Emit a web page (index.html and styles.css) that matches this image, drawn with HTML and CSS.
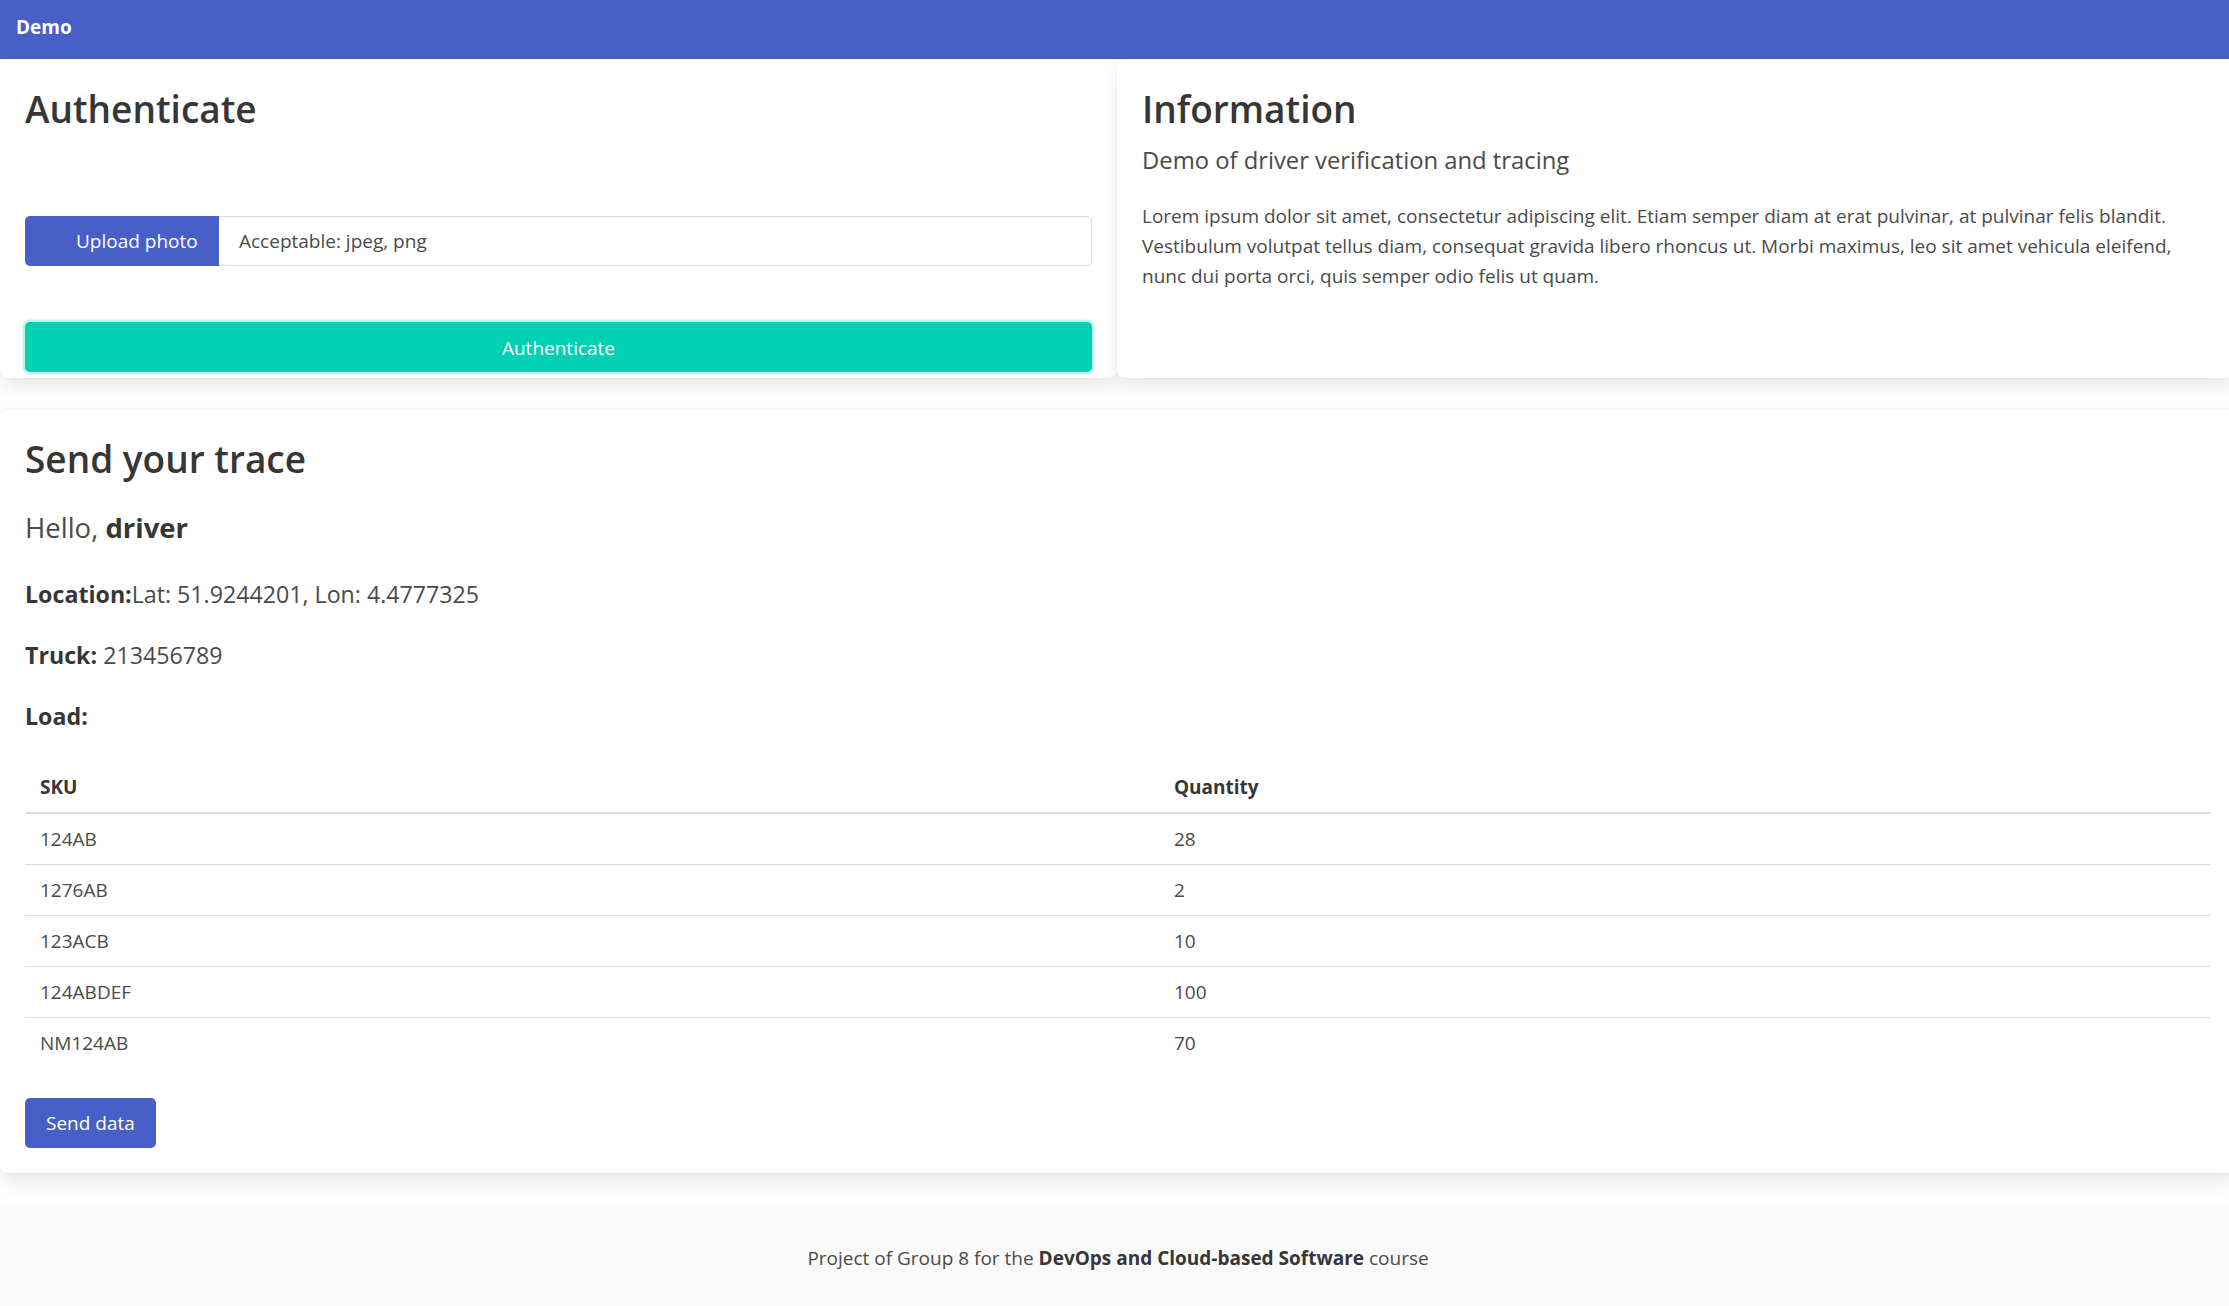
FILE: index.html
```html
<!DOCTYPE html>
<html lang="en">
<head>
<meta charset="utf-8">
<title>Demo</title>
<link rel="stylesheet" href="styles.css">
</head>
<body>
<div class="page">
  <nav class="navbar"><span class="brand">Demo</span></nav>

  <div class="top-row">
    <section class="card card-auth">
      <h1 class="title">Authenticate</h1>
      <div class="file">
        <span class="file-cta"><span class="file-label">Upload photo</span></span>
        <span class="file-name">Acceptable: jpeg, png</span>
      </div>
      <button class="btn btn-auth" type="button">Authenticate</button>
    </section>

    <section class="card card-info">
      <h1 class="title">Information</h1>
      <h2 class="subtitle">Demo of driver verification and tracing</h2>
      <p class="lorem">Lorem ipsum dolor sit amet, consectetur adipiscing elit. Etiam semper diam at erat pulvinar, at pulvinar felis blandit. Vestibulum volutpat tellus diam, consequat gravida libero rhoncus ut. Morbi maximus, leo sit amet vehicula eleifend, nunc dui porta orci, quis semper odio felis ut quam.</p>
    </section>
  </div>

  <section class="card card-trace">
    <h1 class="title">Send your trace</h1>
    <p class="hello">Hello, <strong>driver</strong></p>
    <p class="info-line first"><strong>Location:</strong>Lat: 51.9244201, Lon: 4.4777325</p>
    <p class="info-line"><strong>Truck:</strong> 213456789</p>
    <p class="info-line"><strong>Load:</strong></p>

    <table class="load-table">
      <thead>
        <tr><th class="col-sku">SKU</th><th>Quantity</th></tr>
      </thead>
      <tbody>
        <tr><td>124AB</td><td>28</td></tr>
        <tr><td>1276AB</td><td>2</td></tr>
        <tr><td>123ACB</td><td>10</td></tr>
        <tr><td>124ABDEF</td><td>100</td></tr>
        <tr><td>NM124AB</td><td>70</td></tr>
      </tbody>
    </table>

    <button class="btn btn-send" type="button">Send data</button>
  </section>

  <footer class="footer">
    <p>Project of Group 8 for the <strong>DevOps and Cloud-based Software</strong> course</p>
  </footer>
</div>
</body>
</html>
```

FILE: styles.css
```css
html {
  overflow-x: hidden;
}

body {
  margin: 0;
  background: #ffffff;
  font-family: "Open Sans", "Noto Sans", sans-serif;
  color: #4a4a4a;
  overflow-x: hidden;
}

.page {
  margin-right: -7px;
}

strong {
  font-weight: 700;
  color: #363636;
}

/* Navbar */
.navbar {
  height: 59px;
  box-sizing: border-box;
  padding: 14px 16px 0;
  background: #485fc7;
}

.brand {
  display: block;
  font-size: 19px;
  line-height: 26px;
  font-weight: 700;
  color: #ffffff;
}

/* Cards */
.card {
  background: #ffffff;
  border-radius: 7.5px;
  box-shadow: 0 10px 20px -2.5px rgba(10, 10, 10, 0.1), 0 0 0 1px rgba(10, 10, 10, 0.02);
  box-sizing: border-box;
  padding: 25px;
}

.top-row {
  display: flex;
  height: 319px;
}

.card-auth {
  width: 1117px;
  flex: none;
  padding-bottom: 6px;
  display: flex;
  flex-direction: column;
}

.card-info {
  flex: 1;
}

.title {
  margin: 3px 0 0;
  font-size: 37px;
  line-height: 44px;
  font-weight: 600;
  color: #363636;
}

/* File input */
.file {
  display: flex;
  height: 50px;
  margin-top: 85px;
}

.file-cta {
  width: 194px;
  flex: none;
  box-sizing: border-box;
  padding-left: 51px;
  background: #485fc7;
  color: #ffffff;
  border-radius: 5px 0 0 5px;
  font-size: 19px;
  line-height: 50px;
}

.file-name {
  flex: 1;
  border: 1px solid #dbdbdb;
  border-left: 0;
  border-radius: 0 5px 5px 0;
  padding-left: 20px;
  font-size: 19px;
  line-height: 48px;
  color: #4a4a4a;
}

/* Buttons */
.btn {
  display: block;
  height: 50px;
  border: 0;
  border-radius: 5px;
  color: #ffffff;
  font-family: "Open Sans", "Noto Sans", sans-serif;
  font-size: 19px;
  line-height: 50px;
  cursor: pointer;
}

.btn-auth {
  width: 100%;
  margin-top: 56px;
  background: #00d1b2;
  box-shadow: 0 0 0 2.5px rgba(0, 209, 178, 0.25);
}

.btn-send {
  margin-top: 30px;
  padding: 0 21px;
  background: #485fc7;
}

/* Info card */
.subtitle {
  margin: 14px 0 0;
  font-size: 23.8px;
  line-height: 30px;
  font-weight: 400;
  color: #4a4a4a;
}

.lorem {
  margin: 26px 0 0;
  max-width: 1040px;
  font-size: 19px;
  line-height: 30px;
}

/* Trace card */
.card-trace {
  margin-top: 31px;
}

.hello {
  margin: 29px 0 0;
  font-size: 27.5px;
  line-height: 36px;
}

.info-line {
  margin: 25px 0 0;
  font-size: 23.2px;
  line-height: 36px;
}

.info-line.first {
  margin-top: 30px;
}

.load-table {
  width: 100%;
  margin-top: 28px;
  border-collapse: collapse;
  font-size: 19px;
  line-height: 30px;
}

.load-table th {
  text-align: left;
  padding: 10px 15px;
  font-weight: 700;
  color: #363636;
  border-bottom: 2px solid #dbdbdb;
}

.load-table .col-sku {
  width: 1104px;
}

.load-table td {
  padding: 10px 15px;
  color: #4a4a4a;
  border-bottom: 1px solid #dbdbdb;
}

.load-table tbody tr:last-child td {
  border-bottom: 0;
}

/* Footer */
.footer {
  margin-top: 30px;
  padding: 40px 24px 96px;
  background: #fafafa;
  text-align: center;
}

.footer p {
  margin: 0;
  font-size: 19px;
  line-height: 30px;
}
```
